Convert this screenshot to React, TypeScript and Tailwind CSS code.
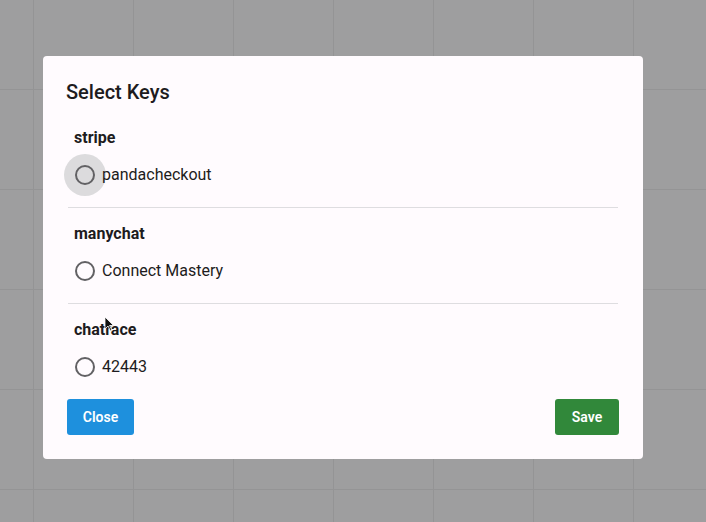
type KeyGroup = {
  provider: string;
  keys: string[];
};

const groups: KeyGroup[] = [
  { provider: "stripe", keys: ["pandacheckout"] },
  { provider: "manychat", keys: ["Connect Mastery"] },
  { provider: "chatrace", keys: ["42443"] },
];

function RadioOption({ label, hovered }: { label: string; hovered?: boolean }) {
  return (
    <label className="flex h-[42px] items-center -ml-[10px] cursor-pointer">
      <span
        className={
          "flex h-[42px] w-[42px] shrink-0 items-center justify-center rounded-full " +
          (hovered ? "bg-[#dcdbdd]" : "")
        }
      >
        <span className="h-5 w-5 rounded-full border-2 border-[#626164]" />
      </span>
      <span className="-ml-[4px] text-base leading-6 text-[#1d1b20]">{label}</span>
    </label>
  );
}

// cursor arrow sitting over the "chatrace" label in the screenshot
function Cursor() {
  return (
    <svg
      className="absolute left-[104px] top-[316px]"
      width="11"
      height="16"
      viewBox="0 0 11 16"
    >
      <path
        d="M1 1 L1 13 L4 10 L6.5 15 L8 14.3 L5.6 9.5 L9.5 9.5 Z"
        fill="#111"
        stroke="#fff"
        strokeWidth="0.8"
        strokeLinejoin="round"
      />
    </svg>
  );
}

export default function App() {
  return (
    <div
      className="relative h-[522px] w-[706px] overflow-hidden bg-[#9e9e9f] bg-[linear-gradient(to_right,#949495_1px,transparent_1px),linear-gradient(to_bottom,#949495_1px,transparent_1px)] bg-[length:100px_100px] bg-[position:33px_89px] pl-[43px] pt-[56px]"
      style={{ fontFamily: "Roboto, 'Liberation Sans', sans-serif" }}
    >
      <div className="flex h-[403px] w-[600px] flex-col rounded-[4px] bg-[#fffbfe] px-6 pt-5 pb-6">
        <h2 className="h-8 text-[20px] font-medium leading-8 text-[#1d1b20] -ml-px">
          Select Keys
        </h2>

        <div className="mt-[18px] flex flex-col">
          {groups.map((g, i) => (
            <div
              key={g.provider}
              className={
                "mx-px pl-[6px] " +
                (i === 0 ? "pb-[11px]" : "border-t border-[#dedde0] pt-[14px]") +
                (i === 1 ? " pb-[11px]" : "")
              }
            >
              <div className="h-6 text-base font-bold leading-6 text-[#1d1b20]">
                {g.provider}
              </div>
              <div className="mt-1 flex flex-col">
                {g.keys.map((k) => (
                  <RadioOption key={k} label={k} hovered={i === 0} />
                ))}
              </div>
            </div>
          ))}
        </div>

        <div className="mt-[11px] flex items-center justify-between">
          <button className="h-9 w-[67px] rounded-[3px] bg-[#1e90dd] text-sm font-semibold text-white">
            Close
          </button>
          <button className="h-9 w-[64px] rounded-[3px] bg-[#31883a] text-sm font-semibold text-white">
            Save
          </button>
        </div>
      </div>
      <Cursor />
    </div>
  );
}
